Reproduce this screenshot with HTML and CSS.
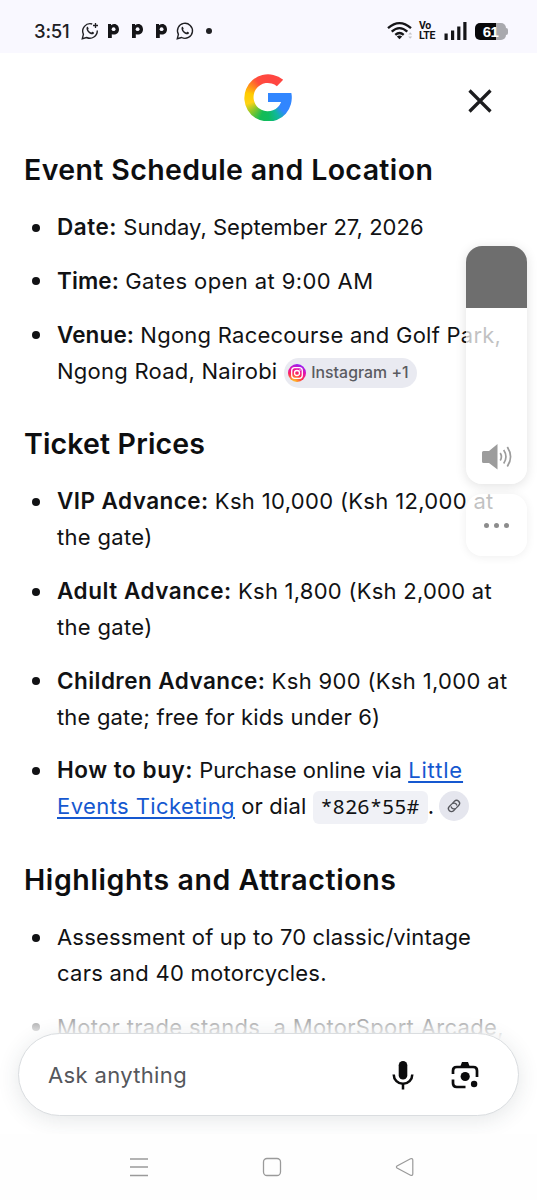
FILE: index.html
```html
<!DOCTYPE html>
<html lang="en">
<head>
<meta charset="utf-8">
<title>Event search</title>
<link rel="stylesheet" href="styles.css">
</head>
<body>
<div class="screen">
  <div class="status">
    <span class="clock">3:51</span>
    <svg class="wa" viewBox="0 0 18 18"><path d="M11.2 2A7.5 7.5 0 0 0 2.4 12.400L1.300 16.700L5.600 15.500A7.500 7.500 0 0 0 16.300 8.500" fill="none" stroke="#202024" stroke-width="1.400"/><path d="M5.700 5.300C6.500 4.400 7 4.900 7.600 6.600C7.800 7.200 6.900 7.600 7.200 8C8 9.300 8.900 10 10.100 10.500C10.600 10.700 11 9.600 11.500 9.800C13.300 10.600 13.400 10.800 12.600 11.800C10.500 14 4.300 9.300 5.700 5.300Z" fill="#202024"/><path d="M14.500 1v5M12 3.500h5" stroke="#202024" stroke-width="1.300"/></svg>
    <svg class="pp" viewBox="0 0 12 16"><path d="M1 1h3v1.200C8 -.8 12 2 12 6.300C12 10.500 8.300 12.500 4.800 11.200V15H1Z" fill="#151518"/><circle cx="6.600" cy="6.200" r="1.900" fill="#f9f8ff"/></svg>
    <svg class="pp" viewBox="0 0 12 16"><path d="M1 1h3v1.200C8 -.8 12 2 12 6.300C12 10.500 8.300 12.500 4.800 11.200V15H1Z" fill="#151518"/><circle cx="6.600" cy="6.200" r="1.900" fill="#f9f8ff"/></svg>
    <svg class="pp" viewBox="0 0 12 16"><path d="M1 1h3v1.200C8 -.8 12 2 12 6.300C12 10.500 8.300 12.500 4.800 11.200V15H1Z" fill="#151518"/><circle cx="6.600" cy="6.200" r="1.900" fill="#f9f8ff"/></svg>
    <svg class="wa last" viewBox="0 0 18 18"><path d="M5.600 15.500L1.300 16.700L2.400 12.400A7.500 7.500 0 1 1 5.600 15.500Z" fill="none" stroke="#202024" stroke-width="1.400"/><path d="M5.700 5.300C6.500 4.400 7 4.900 7.600 6.600C7.800 7.200 6.900 7.600 7.200 8C8 9.300 8.900 10 10.100 10.500C10.600 10.700 11 9.600 11.500 9.800C13.300 10.600 13.400 10.800 12.600 11.800C10.500 14 4.300 9.300 5.700 5.300Z" fill="#202024"/></svg>
    <i class="more-dot"></i>
    <span class="fill"></span>
    <svg class="wifi" viewBox="0 0 26 18"><g fill="none" stroke="#151518" stroke-width="2.300"><path d="M1 6.200Q12.500 -4 24 6.200"/><path d="M4.700 9.700Q12.500 2.600 20.300 9.700"/><path d="M8.300 12.900Q12.500 9.200 16.700 12.900"/></g><path d="M9.800 14.500Q12.500 12.300 15.200 14.500L12.500 17.300Z" fill="#151518"/><path d="M21.200 12.500l2-2.200 2 2.200zM21.200 14.500l2 2.200 2-2.200z" fill="#c4c4c9"/></svg>
    <span class="volte"><span>Vo</span><span>LTE</span></span>
    <svg class="bars" viewBox="0 0 23 18"><path d="M.5 11.500h3.200V18H.5zM7 8.500h3.200V18H7zM13.200 4.500h3.200V18h-3.200zM19.300 0h3.200v18h-3.200z" fill="#151518"/></svg>
    <span class="battery"><b>61</b></span>
  </div>

  <div class="top">
    <span></span>
    <div class="google" role="img" aria-label="Google">
      <svg viewBox="0 0 48 48">
        <foreignObject width="48" height="48" clip-path="url(#g)"><div class="spectrum"></div></foreignObject>
        <clipPath id="g"><path d="M39.200 6.800L32.900 13.300A14.200 14.200 0 1 0 37.100 29H24V20H47.200A23.700 23.700 0 1 1 39.200 6.800Z"/></clipPath>
        <path d="M24 20H47.200Q47.600 24.500 46.700 29H24Z" fill="#3186ff"/>
      </svg>
    </div>
    <svg class="close" viewBox="0 0 24 24"><path d="M1.500 1.500l21 21M22.500 1.500l-21 21" stroke="#1c1c1e" stroke-width="3.200"/></svg>
  </div>

  <main class="answer">
    <h2 class="h-event">Event Schedule and Location</h2>
    <ul>
      <li><b class="b8">Date:</b> <span class="r0">Sunday, September 27, 2026</span></li>
      <li><b class="b4">Time:</b> <span class="r4">Gates open at 9:00 AM</span></li>
      <li><b class="b4">Venue:</b> <span class="r2">Ngong Racecourse and Golf Park,<br>Ngong Road, Nairobi</span> <span class="chip"><svg viewBox="0 0 18 18"><defs><radialGradient id="ig" cx="30%" cy="105%" r="110%"><stop offset="0" stop-color="#ffd33c"/><stop offset=".2" stop-color="#ff9b28"/><stop offset=".48" stop-color="#ff2852"/><stop offset=".72" stop-color="#e813a7"/><stop offset="1" stop-color="#8b20ff"/></radialGradient></defs><circle cx="9" cy="9" r="9" fill="url(#ig)"/><g fill="none" stroke="#fff" stroke-width="1.300"><rect x="3.700" y="3.700" width="10.600" height="10.600" rx="3"/><circle cx="9" cy="9" r="2.500"/></g><circle cx="12" cy="6" r=".7" fill="#fff"/></svg>Instagram +1</span></li>
    </ul>
    <h2 class="h-ticket">Ticket Prices</h2>
    <ul>
      <li><b class="b7">VIP Advance:</b> <span class="r3">Ksh 10,000 (Ksh 12,000 at</span><br><span class="r3">the gate)</span></li>
      <li><b class="b8">Adult Advance:</b> <span class="r2">Ksh 1,800 (Ksh 2,000 at</span><br><span class="r3">the gate)</span></li>
      <li><b class="b7">Children Advance:</b> <span class="r3">Ksh 900 (Ksh 1,000 at</span><br><span class="r1">the gate; free for kids under 6)</span></li>
      <li><b class="b8">How to buy:</b> <span class="r0">Purchase online via</span> <a class="link" href="#"><span class="wide">Little</span><br>Events Ticketing</a> <span class="r1">or dial</span> <code>*826*55#</code><span class="stop">.</span> <span class="cite"><svg viewBox="0 0 16 16"><g fill="none" stroke="#55565c" stroke-width="1.300" stroke-linecap="round" transform="rotate(-45 8 8)"><path d="M6.600 11H4.400a3 3 0 0 1 0-6H8a3 3 0 0 1 2.600 4.300"/><path d="M9.400 5h2.200a3 3 0 0 1 0 6H8a3 3 0 0 1-2.600-4.300"/></g></svg></span></li>
    </ul>
    <h2 class="h-high">Highlights and Attractions</h2>
    <ul>
      <li><span class="r1">Assessment of up to 70 classic/vintage</span><br><span class="r2">cars and 40 motorcycles.</span></li>
      <li><span class="r3">Motor trade stands, a MotorSport Arcade,</span></li>
    </ul>
  </main>

  <div class="dock">
    <div class="ask">
      <span class="hint">Ask anything</span>
      <svg class="mic" viewBox="0 0 22 30"><rect x="6.700" y="1" width="8.600" height="18.500" rx="4.300" fill="#0b0b0c"/><path d="M1.700 14.500a9.300 9.300 0 0 0 18.600 0M11 24v5.500" fill="none" stroke="#0b0b0c" stroke-width="2.500"/></svg>
      <svg class="lens" viewBox="0 0 28 28"><path d="M2 13V9.700Q2 6 5.700 6H22.300Q26 6 26 9.700V16M2 18.500V22.300Q2 26 5.700 26H14.500" fill="none" stroke="#0b0b0c" stroke-width="2.700"/><path d="M9.500 5l1.500-4h6l1.500 4z" fill="#0b0b0c"/><circle cx="14.200" cy="15.500" r="4.600" fill="#0b0b0c"/><circle cx="23.100" cy="23" r="3.200" fill="#0b0b0c"/></svg>
    </div>
  </div>

  <nav class="nav">
    <svg viewBox="0 0 20 20"><path d="M1 2h18M1 10h18M1 18.500h18" stroke="#9a9a9a" stroke-width="1.500"/></svg>
    <svg viewBox="0 0 20 20"><rect x="1.500" y="1.500" width="17" height="17" rx="3.500" fill="none" stroke="#9a9a9a" stroke-width="1.300"/></svg>
    <svg viewBox="0 0 20 20"><path d="M2 9Q.8 10 2 11L15.500 18.300Q17.800 19 17.800 16.800V3.200Q17.800 1 15.500 1.700Z" fill="none" stroke="#9a9a9a" stroke-width="1.200"/></svg>
  </nav>

  <div class="volume">
    <div class="slider"><svg viewBox="0 0 30 26"><path d="M0 8.500Q0 7 1.500 7H7L15.500 0V25.500L7 19H1.500Q0 19 0 17.500Z" fill="#9c9c9c"/><path d="M18.200 9q2.400 3.700 0 7.500M21.700 6q4.500 6.700 0 13.500M25.300 3q6.500 9.700 0 19.500" fill="none" stroke="#9c9c9c" stroke-width="1.700"/></svg></div>
    <div class="more"><i></i><i></i><i></i></div>
  </div>
</div>
</body>
</html>
```
FILE: styles.css
```css
* { box-sizing: border-box; }
body { margin: 0; background: #fff; font-family: Inter, "Liberation Sans", sans-serif; color: #111214; }
svg { display: block; overflow: visible; flex: none; }
.screen { position: relative; width: 537px; height: 1200px; overflow: hidden; background: #fff; display: flex; flex-direction: column; }

.status { height: 53px; flex: none; background: #f9f8ff; display: flex; align-items: center; padding: 9px 31px 0 34px; }
.clock { font-size: 18.5px; font-weight: 500; width: 47px; letter-spacing: -.2px; color: #202024; }
.wa { width: 18px; height: 18px; margin-right: 8px; }
.wa.last { margin: 0 12px 0 -3px; }
.pp { width: 12px; height: 16px; margin-right: 12px; }
.more-dot { width: 6px; height: 6px; border-radius: 50%; background: #202024; }
.fill { flex: 1; }
.wifi { width: 26px; height: 18px; margin-right: 6px; }
.volte { display: grid; grid-template-rows: 10px 10px; font: 700 10.500px/10px Roboto, sans-serif; width: 25px; letter-spacing: -.3px; }
.bars { width: 23px; height: 18px; margin-right: 8px; }
.battery { position: relative; width: 31px; height: 17px; border-radius: 5px; background: linear-gradient(90deg, #08080a 68%, #a9a9ae 68%); display: flex; justify-content: center; align-items: center; }
.battery::after { content: ""; position: absolute; right: -2px; top: 5px; width: 2px; height: 7px; border-radius: 0 2px 2px 0; background: #a9a9ae; }
.battery b { font: 700 15px/17px "Liberation Sans", sans-serif; color: #fff; letter-spacing: -.5px; }

.top { height: 99px; flex: none; display: grid; grid-template-columns: 1fr 48px 1fr; padding: 20px 0 0; }
.google svg { width: 48px; height: 48px; margin-left: -.8px; }
.spectrum { width: 48px; height: 48px; background: conic-gradient(from 0deg, #ff4641 0deg, #ff4641 60deg, #3186ff 76deg, #3186ff 132deg, #10b6a0 152deg, #0ebc5f 178deg, #14bb55 200deg, #8cc72a 228deg, #ffd314 252deg, #ffcc00 280deg, #ff9419 300deg, #ff4d3c 326deg, #ff4641 360deg); }
.close { width: 24px; height: 24px; justify-self: end; margin: 16px 45px 0 0; }

.answer { padding: 0 0 0 24px; height: 880px; flex: none; white-space: nowrap; }
h2 { margin: 37px 0 22px; font-size: 28.500px; line-height: 36px; font-weight: 600; color: #0d0e10; }
h2:first-child { margin-top: 0; }
.h-event { letter-spacing: .38px; }
.h-ticket { letter-spacing: .15px; }
.h-high { letter-spacing: .6px; }
ul { list-style: none; margin: 0; padding: 0; display: flex; flex-direction: column; gap: 18px; }
li { position: relative; padding-left: 33px; font-size: 22px; line-height: 35.850px; }
li::before { content: ""; position: absolute; left: 8px; top: 13.500px; width: 8px; height: 8px; border-radius: 50%; background: #111214; }
li b { font-weight: 600; font-size: 22.500px; line-height: 20px; }
.b4 { letter-spacing: .12px; }
.b7 { letter-spacing: .44px; }
.b8 { letter-spacing: .54px; }
.r0 { letter-spacing: .02px; }
.r1 { letter-spacing: .17px; }
.r2 { letter-spacing: .25px; }
.r3 { letter-spacing: .33px; }
.r4 { letter-spacing: .4px; }
.link { color: #1558d0; letter-spacing: .42px; text-decoration: underline; text-decoration-thickness: 1.500px; text-underline-offset: 3px; }
.wide { letter-spacing: .85px; }
.chip { display: inline-flex; align-items: center; vertical-align: middle; height: 30px; width: 133px; padding: 0 0 0 4px; gap: 5.500px; margin: 0; border-radius: 15px; background: #e9eaf1; color: #5a5b61; font-size: 15.800px; line-height: 30px; font-weight: 500; letter-spacing: .05px; }
.chip svg { width: 18px; height: 18px; }
code { display: inline-block; vertical-align: middle; height: 33px; margin: -1px 0 0; width: 115px; padding-left: 7.500px; border-radius: 6px; background: #f0f1f6; font: 20.600px/31px "Noto Sans Mono", "DejaVu Sans Mono", monospace; }
.cite { display: inline-flex; align-items: center; justify-content: center; vertical-align: middle; width: 30px; height: 30px; margin: -4px 0 0 -1px; border-radius: 50%; background: #e5e6ee; }
.cite svg { width: 16px; height: 16px; }

.dock { position: absolute; left: 0; top: 1010px; width: 537px; height: 124px; overflow: hidden; padding: 23px 18px 0; background: linear-gradient(rgba(255,255,255,.45), rgba(255,255,255,.95) 26px, #fff 32px); }
.ask { height: 83px; border: 1px solid #dadde0; border-radius: 42px; background: #fff; box-shadow: 0 4px 22px rgba(40,60,65,.12); display: flex; align-items: center; padding: 0 39px 0 29px; }
.hint { flex: 1; font-size: 22px; letter-spacing: .35px; color: #55575c; }
.mic { width: 22px; height: 30px; margin-right: 37px; }
.lens { width: 28px; height: 28px; }

.nav { position: absolute; left: 0; top: 1134px; width: 537px; height: 66px; background: #fefefe; display: flex; justify-content: space-between; align-items: center; padding: 0 122px 0 129px; }
.nav svg { width: 20px; height: 20px; }

.volume { position: absolute; left: 466px; top: 246px; width: 61px; display: flex; flex-direction: column; gap: 10px; }
.slider { height: 238px; border-radius: 16px; background: linear-gradient(#6e6e6e 62px, rgba(255,255,255,.74) 62px); box-shadow: 0 2px 12px rgba(0,0,0,.12); display: flex; justify-content: center; align-items: flex-end; padding-bottom: 14px; }
.slider svg { width: 30px; height: 26px; }
.more { height: 62px; border-radius: 16px; background: rgba(255,255,255,.74); box-shadow: 0 1px 10px rgba(0,0,0,.07); display: flex; align-items: center; justify-content: center; gap: 5px; }
.more i { width: 5px; height: 5px; border-radius: 50%; background: #8c8c8c; }
```
